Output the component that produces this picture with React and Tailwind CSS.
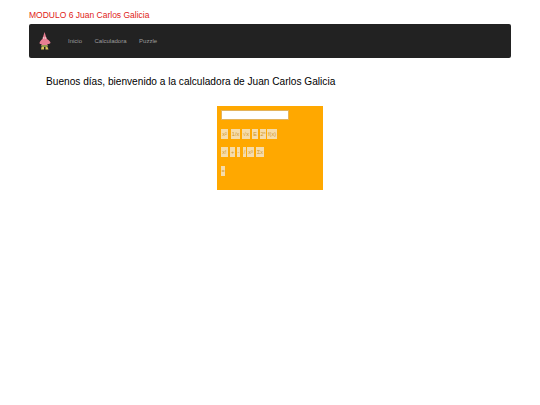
const row1 = [
  { label: "x²", cls: "w-[7px]" },
  { label: "1/x", cls: "w-[9px] ml-[3px]" },
  { label: "√x", cls: "w-[8px] ml-[2px]" },
  { label: "E", cls: "w-[6px] ml-[2px]" },
  { label: "2ⁿ", cls: "w-[6px] ml-[2px]" },
  { label: "f(x)", cls: "w-[10px] ml-[1px]" },
]

const row2 = [
  { label: "x!", cls: "w-[7px]" },
  { label: "+", cls: "w-[5px] ml-[2px]" },
  { label: "-", cls: "w-[3px] ml-[2px]" },
  { label: "/", cls: "w-[3px] ml-[3px]" },
  { label: "x³", cls: "w-[7px] ml-[1px]" },
  { label: "Σx", cls: "w-[8px] ml-[2px]" },
]

const CalcButton = ({ label, cls }) => (
  <button className={`${cls} h-[10px] bg-[#f6dcaa] text-[#cf9528] text-[5.500px] leading-[10px] text-center overflow-hidden`}>
    {label}
  </button>
)

const Patrick = () => (
  <svg width="14" height="20" viewBox="0 0 14 20">
    <path d="M6.500 1 C7.500 4 8 6 9 8 C11 9 12.500 11 12.500 12 C11.500 13 10.500 13 9.500 13 L9.500 15 L3.500 15 L3.500 13 C2.500 13 1.500 13 1.500 12 C2 10 3 9 4.500 8 C5 6 6 3 6.500 1 Z" fill="#e87f92" />
    <path d="M3.500 14 L9.500 14 L9.500 16 L3.500 16 Z" fill="#8f9a4a" />
    <path d="M3.500 16 L6 16 L6 18.500 L3 18.500 Z" fill="#dcc45a" />
    <path d="M7.500 16 L9.500 16 L10.500 18.500 L7.500 18.500 Z" fill="#dcc45a" />
    <circle cx="5.500" cy="7" r="0.800" fill="#f7d8dc" />
    <circle cx="7.500" cy="7" r="0.800" fill="#f7d8dc" />
  </svg>
)

export default function App() {
  return (
    <div className="w-[540px] h-[405px] bg-white font-['Liberation_Sans',sans-serif] overflow-hidden">
      <div className="px-[29px] pt-[9px]">
        <h1 className="text-[8.500px] leading-[12px] text-[#e01b17] h-[15px]">MODULO 6 Juan Carlos Galicia</h1>

        <nav className="h-[34px] bg-[#222222] rounded-[2px] flex items-center pl-[9px] text-[6px] text-[#9d9d9d]">
          <Patrick />
          <div className="flex gap-[12.500px] ml-[16px]">
            <a>Inicio</a>
            <a>Calculadora</a>
            <a>Puzzle</a>
          </div>
        </nav>

        <p className="text-[10.150px] leading-[16px] text-black mt-[16px] ml-[17px]">
          Buenos días, bienvenido a la calculadora de Juan Carlos Galicia
        </p>
      </div>

      <div className="flex justify-center mt-[16px]">
        <div className="w-[106px] h-[84px] bg-[#ffa800] pt-[4px] pl-[4px] flex flex-col">
          <div className="w-[68px] h-[10px] bg-white border border-[#e3b35c]" />
          <div className="flex mt-[9px]">
            {row1.map((b) => <CalcButton key={b.label} {...b} />)}
          </div>
          <div className="flex mt-[8px]">
            {row2.map((b) => <CalcButton key={b.label} {...b} />)}
          </div>
          <div className="flex mt-[9px]">
            <CalcButton label="=" cls="w-[4px]" />
          </div>
        </div>
      </div>
    </div>
  )
}
